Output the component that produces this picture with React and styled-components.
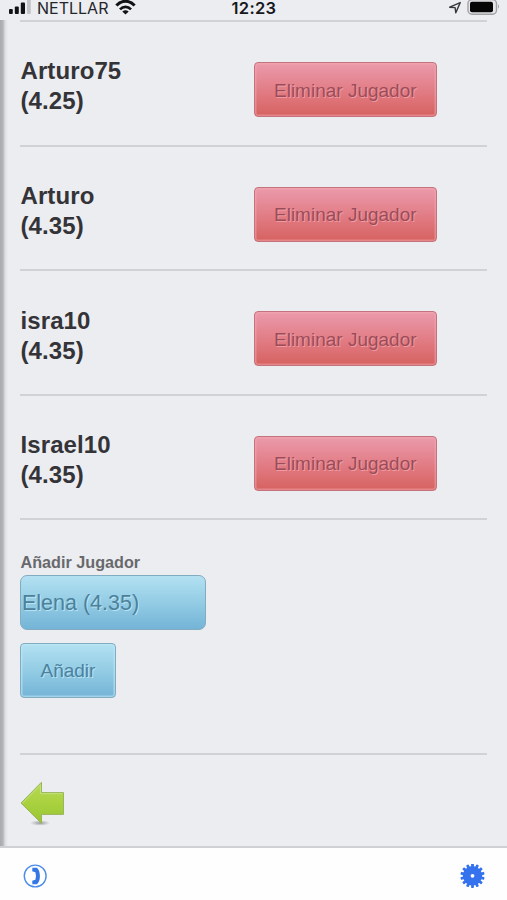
import React, { useState } from 'react';
import styled, { createGlobalStyle } from 'styled-components';

const GlobalStyle = createGlobalStyle`
  * {
    box-sizing: border-box;
  }

  body {
    margin: 0;
    background: #ecedf1;
    font-family: 'Liberation Sans', Arial, sans-serif;
  }
`;

const Screen = styled.div`
  display: flex;
  flex-direction: column;
  width: 507px;
  height: 900px;
  overflow: hidden;
  background: #ecedf1;
`;

const StatusBar = styled.header`
  display: grid;
  grid-template-columns: 1fr auto 1fr;
  flex: none;
  height: 20px;
  padding: 0 7px 0 8px;
  font-family: Inter, 'Liberation Sans', sans-serif;
  font-size: 16px;
  line-height: 16px;
  color: #25262b;
`;

const StatusGroup = styled.div`
  display: flex;
  align-items: flex-start;
  justify-content: ${({ $end }) => ($end ? 'flex-end' : 'flex-start')};
  gap: ${({ $end }) => ($end ? '5px' : '0')};

  svg {
    display: block;
    flex: none;
  }
`;

const Carrier = styled.span`
  width: 71px;
  margin: 0 7px 0 6px;
`;

const Clock = styled.span`
  font-size: 16.5px;
  font-weight: 600;
  letter-spacing: 0.3px;
  color: #17181c;
`;

const Page = styled.main`
  flex: 1;
  padding: 0 20px;
  background: linear-gradient(to right, #a9aaaf 0, #b4b5b9 3px, #dcdde1 5px, #ecedf1 8px);
`;

const PlayerRow = styled.section`
  display: grid;
  grid-template-columns: 233.5px auto;
  align-items: start;
  justify-content: start;
  height: 124.6px;
  border-top: 2px solid #d1d2d6;
`;

const PlayerName = styled.h2`
  margin: 34.4px 0 0;
  padding-left: 0.5px;
  font-size: 24px;
  line-height: 30px;
  letter-spacing: 0.1px;
  color: #343438;

  span {
    display: block;
  }
`;

const Button = styled.button`
  height: 55px;
  padding: 2px 19.5px 0;
  border: 1px solid ${({ $danger }) => ($danger ? '#c4737e' : '#82adc0')};
  border-radius: 4px;
  background: ${({ $danger }) =>
    $danger
      ? 'linear-gradient(#eb9aac, #e0787f 60%, #d66260)'
      : 'linear-gradient(#b3e1f2, #93cce4 50%, #74b4d7)'};
  box-shadow: inset 0 0 0 1.5px ${({ $danger }) => ($danger ? 'rgba(246, 170, 178, 0.5)' : 'rgba(190, 232, 247, 0.6)')};
  color: ${({ $danger }) => ($danger ? '#9c4c59' : '#4a819f')};
  font-family: inherit;
  font-size: 19px;
  white-space: nowrap;
  text-shadow: 1px 1px 0 ${({ $danger }) => ($danger ? 'rgba(255, 190, 195, 0.55)' : 'rgba(205, 239, 250, 0.7)')};
`;

const RemoveButton = styled(Button)`
  width: 183px;
  margin-top: 40.2px;
`;

const AddForm = styled.form`
  display: flex;
  flex-direction: column;
  align-items: flex-start;
  height: 234.4px;
  padding-top: 33px;
  border-top: 2px solid #d1d2d6;
`;

const Label = styled.label`
  height: 21.6px;
  padding-left: 0.5px;
  font-size: 16.2px;
  font-weight: bold;
  line-height: 18px;
  color: #68696c;
`;

const PlayerSelect = styled.select`
  appearance: none;
  width: 186px;
  height: 55px;
  margin: 0 0 13px;
  padding: 2px 0 0 1px;
  border: 1px solid #82adc0;
  border-radius: 7px;
  background: linear-gradient(#b3e1f2, #93cce4 50%, #74b4d7);
  color: #4c819c;
  font-family: inherit;
  font-size: 21.5px;
  text-shadow: 1px 1px 0 rgba(205, 239, 250, 0.7);
`;

const Back = styled.div`
  padding-top: 26.5px;
  border-top: 2px solid #d1d2d6;

  svg {
    display: block;
  }
`;

const TabBar = styled.nav`
  display: flex;
  flex: none;
  justify-content: space-between;
  height: 54px;
  padding: 16px 22px 0 23px;
  border-top: 2px solid #cfd0d3;
  background: #fefefe;
`;

const players = [
  { name: 'Arturo75', level: '4.25' },
  { name: 'Arturo', level: '4.35' },
  { name: 'isra10', level: '4.35' },
  { name: 'Israel10', level: '4.35' },
];

const SignalIcon = () => (
  <svg width="23" height="16" viewBox="0 0 23 16">
    <rect x="1" y="9" width="3.8" height="5" rx="1" fill="#111216" />
    <rect x="6.8" y="6.5" width="4" height="7.5" rx="1" fill="#111216" />
    <rect x="12.8" y="2.5" width="4.2" height="11.5" rx="1" fill="#111216" />
    <rect x="19" y="-2" width="3.8" height="16" rx="1" fill="#c2c3c7" />
  </svg>
);

const WifiIcon = () => (
  <svg width="21" height="16" viewBox="0 0 21 16" fill="none" stroke="#111216" strokeWidth="3">
    <path d="M1.4 5.6C6.5-.2 14.5-.2 19.6 5.6" />
    <path d="M5 9.4c3.2-3.3 7.8-3.3 11 0" strokeWidth="2.7" />
    <path d="m10.5 14.5-3.2-3.1q3.2-2.2 6.4 0z" fill="#111216" stroke="none" />
  </svg>
);

const LocationIcon = () => (
  <svg width="14" height="16" viewBox="0 0 14 16">
    <path d="M1.7 7.2 12.2 2.6 7.8 12.8l-.7-5.2z" fill="none" stroke="#37383c" strokeWidth="1.4" strokeLinejoin="round" />
  </svg>
);

const BatteryIcon = () => (
  <svg width="33" height="16" viewBox="0 0 33 16">
    <rect x="1" y="-0.5" width="28.5" height="14.8" rx="4" fill="#e5e6e9" stroke="#a0a1a5" strokeWidth="1.4" />
    <rect x="3" y="1.8" width="23" height="10.5" rx="2" fill="#050506" />
    <path d="M31 4.3q2 2.2 0 4.4z" fill="#a0a1a5" />
  </svg>
);

const ArrowIcon = () => (
  <svg width="46" height="46" viewBox="0 0 46 46">
    <defs>
      <linearGradient id="arrowFill" x1="0" y1="0" x2="0" y2="1">
        <stop offset="0" stopColor="#b6d957" />
        <stop offset="0.5" stopColor="#aad23f" />
        <stop offset="1" stopColor="#98c433" />
      </linearGradient>
      <radialGradient id="arrowShadow">
        <stop offset="0" stopColor="#77787b" stopOpacity="0.7" />
        <stop offset="1" stopColor="#77787b" stopOpacity="0" />
      </radialGradient>
    </defs>
    <ellipse cx="20" cy="42" rx="10" ry="2.8" fill="url(#arrowShadow)" />
    <path
      d="M1 22 21.5 1.2v10.4h22v21.8h-22v9z"
      fill="url(#arrowFill)"
      stroke="#9ab65c"
      strokeWidth="1"
      strokeLinejoin="round"
    />
    <path d="M2.8 22 20.5 3.8v8.9h22" fill="none" stroke="#c4e07a" strokeWidth="1" />
  </svg>
);

const PhoneIcon = () => (
  <svg width="24" height="24" viewBox="0 0 24 24">
    <circle cx="12.2" cy="12" r="10.9" fill="#fff" stroke="#4c8de9" strokeWidth="1.4" />
    <path
      d="M9.4 3.7h4.5q3 2.8 3 8.3t-3 8.3H9.4l-.2-3.6 3.2-.9q1.2-3.8 0-7.6l-3.2-.9z"
      fill="#3478e5"
    />
  </svg>
);

const GearIcon = () => (
  <svg width="26" height="26" viewBox="0 0 26 26">
    <circle cx="13.5" cy="11.8" r="9.7" fill="#3572ed" />
    {Array.from({ length: 14 }, (_, i) => (
      <rect
        key={i}
        x="12.1"
        y="-0.3"
        width="2.8"
        height="4"
        rx="0.7"
        fill="#3572ed"
        transform={`rotate(${(i * 360) / 14} 13.5 11.8)`}
      />
    ))}
    <circle cx="13.5" cy="11.8" r="1.9" fill="#fff" />
  </svg>
);

const App = () => {
  const [selected, setSelected] = useState('Elena (4.35)');

  return (
    <Screen>
      <GlobalStyle />
      <StatusBar>
        <StatusGroup>
          <SignalIcon />
          <Carrier>NETLLAR</Carrier>
          <WifiIcon />
        </StatusGroup>
        <Clock>12:23</Clock>
        <StatusGroup $end>
          <LocationIcon />
          <BatteryIcon />
        </StatusGroup>
      </StatusBar>
      <Page>
        {players.map(({ name, level }) => (
          <PlayerRow key={name}>
            <PlayerName>
              {name}
              <span>({level})</span>
            </PlayerName>
            <RemoveButton type="button" $danger>
              Eliminar Jugador
            </RemoveButton>
          </PlayerRow>
        ))}
        <AddForm onSubmit={(e) => e.preventDefault()}>
          <Label htmlFor="player">Añadir Jugador</Label>
          <PlayerSelect id="player" value={selected} onChange={(e) => setSelected(e.target.value)}>
            <option>Elena (4.35)</option>
          </PlayerSelect>
          <Button type="submit">Añadir</Button>
        </AddForm>
        <Back>
          <ArrowIcon />
        </Back>
      </Page>
      <TabBar>
        <PhoneIcon />
        <GearIcon />
      </TabBar>
    </Screen>
  );
};

export default App;
